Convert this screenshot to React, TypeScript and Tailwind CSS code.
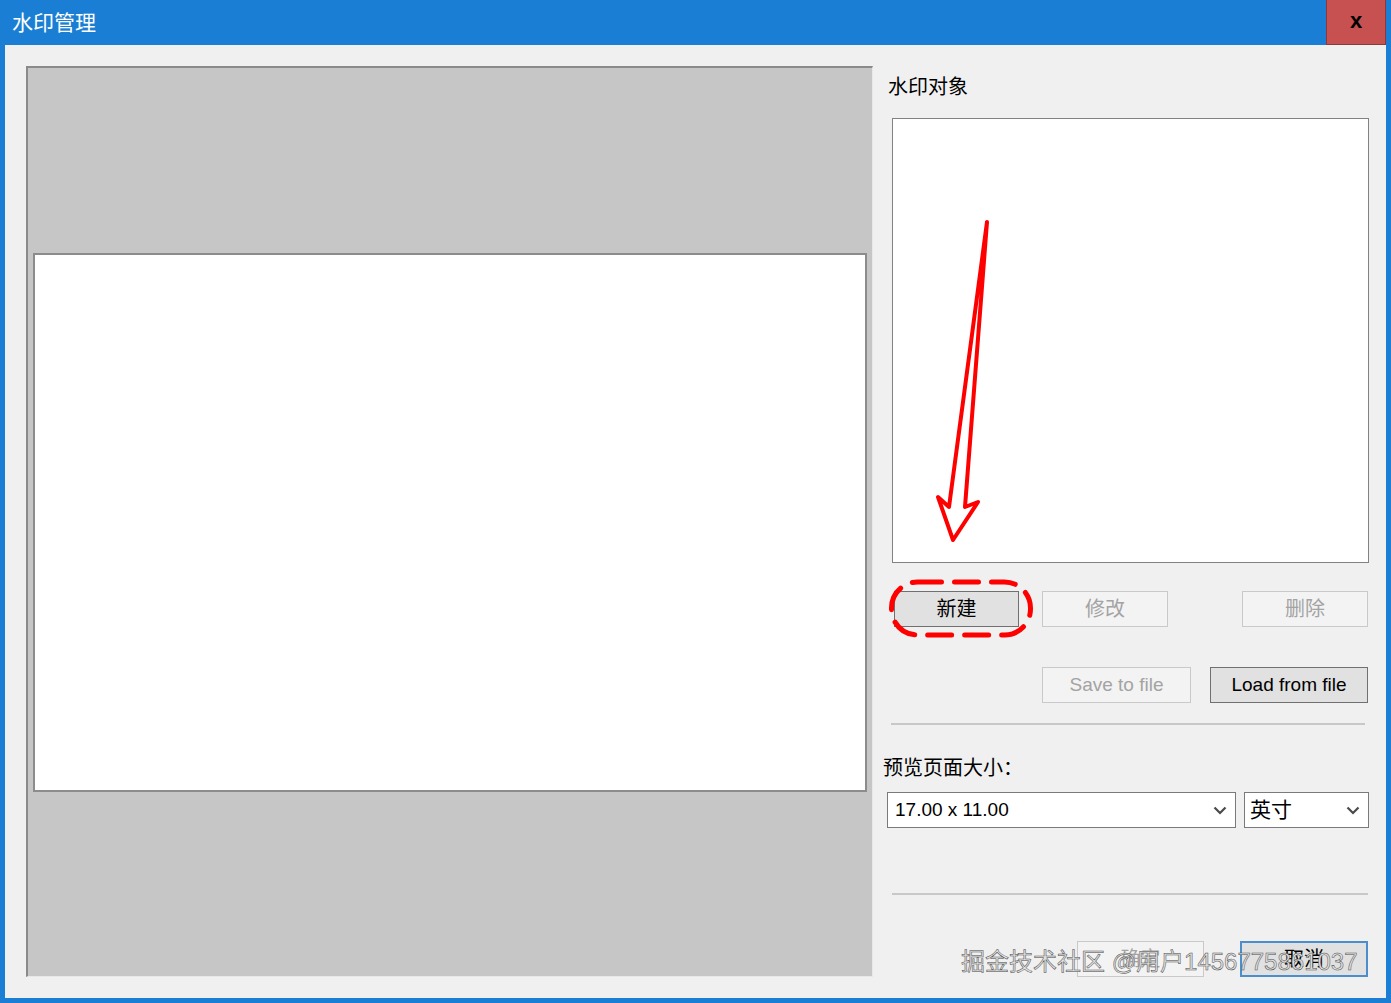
import React from 'react'

const font = "font-['Liberation_Sans','Noto_Sans_CJK_SC',sans-serif]"

function Btn({label, className, disabled, tone = 'normal'}: {label: string; className: string; disabled?: boolean; tone?: 'normal' | 'dark' | 'focus'}) {
  const look = disabled
    ? 'bg-[#f3f3f3] border border-[#c9c9c9] text-[#a3a3a3]'
    : tone === 'dark'
      ? 'bg-[#e1e1e1] border border-[#707070] text-black'
      : tone === 'focus'
        ? 'bg-[#e1e1e1] border-2 border-[#4a8fcc] text-black'
        : 'bg-[#e1e1e1] border border-[#adadad] text-black'
  return (
    <div className={`h-[36px] flex items-center justify-center shrink-0 ${look} ${className}`}>
      {label}
    </div>
  )
}

function Chevron() {
  return (
    <svg width="14" height="9" viewBox="0 0 14 9" className="shrink-0">
      <polyline points="1.5,1.5 7,7 12.5,1.5" fill="none" stroke="#4a4a4a" strokeWidth="2.2" />
    </svg>
  )
}

export default function App() {
  return (
    <div className={`relative w-[1391px] h-[1003px] bg-[#1a7fd4] flex flex-col ${font}`}>
      {/* title bar */}
      <div className="h-[45px] flex items-center justify-between shrink-0">
        <span className="pl-[12px] text-white text-[21px]">水印管理</span>
        <div className="mr-[5px] w-[60px] h-[45px] bg-[#c75050] border border-[#8a3a3a] border-t-0 flex items-center justify-center">
          <span className="text-black font-bold text-[22px] leading-none -mt-[2px]">x</span>
        </div>
      </div>

      {/* body */}
      <div className="flex-1 mx-[5px] mb-[5px] bg-[#f0f0f0] flex pt-[21px] pl-[21px] pb-[21px]">
        {/* preview */}
        <div className="w-[847px] h-[911px] bg-[#c6c6c6] border-t-2 border-l-2 border-[#8a8a8a] border-r border-b border-r-[#e8e8e8] border-b-[#e8e8e8] flex items-center px-[5px]">
          <div className="w-full h-[539px] bg-white border-2 border-[#8c8c8c]" />
        </div>

        {/* side column */}
        <div className="ml-[10px] w-[486px] flex flex-col text-[19px] text-black">
          <div className="ml-[5px] mt-[8px] h-[26px] leading-[26px] text-[20px]">水印对象</div>
          <div className="ml-[9px] mt-[18px] w-[477px] h-[445px] bg-white border border-[#828282]" />

          <div className="flex mt-[28px] text-[20px]">
            <Btn label="新建" tone="dark" className="ml-[11px] w-[125px]" />
            <Btn label="修改" disabled className="ml-[23px] w-[126px]" />
            <Btn label="删除" disabled className="ml-[74px] w-[126px]" />
          </div>

          <div className="flex mt-[40px]">
            <Btn label="Save to file" disabled className="ml-[159px] w-[149px]" />
            <Btn label="Load from file" tone="dark" className="ml-[19px] w-[158px]" />
          </div>

          <div className="ml-[8px] mt-[20px] w-[474px] h-[2px] bg-[#c8c8c8]" />

          <div className="mt-[30px] h-[26px] leading-[26px] text-[20px]">预览页面大小：</div>

          <div className="flex mt-[11px]">
            <div className="ml-[4px] w-[349px] h-[36px] bg-white border border-[#7a7a7a] flex items-center justify-between pl-[7px] pr-[8px]">
              <span>17.00 x 11.00</span>
              <Chevron />
            </div>
            <div className="ml-[8px] w-[125px] h-[36px] bg-white border border-[#7a7a7a] flex items-center justify-between pl-[5px] pr-[8px]">
              <span className="text-[21px]">英寸</span>
              <Chevron />
            </div>
          </div>

          <div className="ml-[9px] mt-[65px] w-[476px] h-[2px] bg-[#c8c8c8]" />

          <div className="flex mt-[46px] text-[20px]">
            <Btn label="确定" disabled className="ml-[194px] w-[127px]" />
            <Btn label="取消" tone="focus" className="ml-[36px] w-[128px]" />
          </div>
        </div>
      </div>

      {/* annotations */}
      <svg className="absolute inset-0 pointer-events-none" width="1391" height="1003" viewBox="0 0 1391 1003">
        <polygon
          points="987,222 949,507 938,497 953,540 978,502 965,507"
          fill="none"
          stroke="#ff0000"
          strokeWidth="4"
          strokeLinejoin="round"
        />
        <rect
          x="891.5"
          y="582"
          width="139"
          height="53"
          rx="26"
          fill="none"
          stroke="#ff0000"
          strokeWidth="5"
          strokeDasharray="24 13"
          strokeLinecap="round"
        />
      </svg>

      {/* site watermark */}
      <span className="absolute left-[961px] top-[945px] text-[24px] leading-[34px] whitespace-nowrap text-[#e2e2e2] [-webkit-text-stroke:0.5px_#4a4a4a] pointer-events-none">
        掘金技术社区 @用户1456775861037
      </span>
    </div>
  )
}
